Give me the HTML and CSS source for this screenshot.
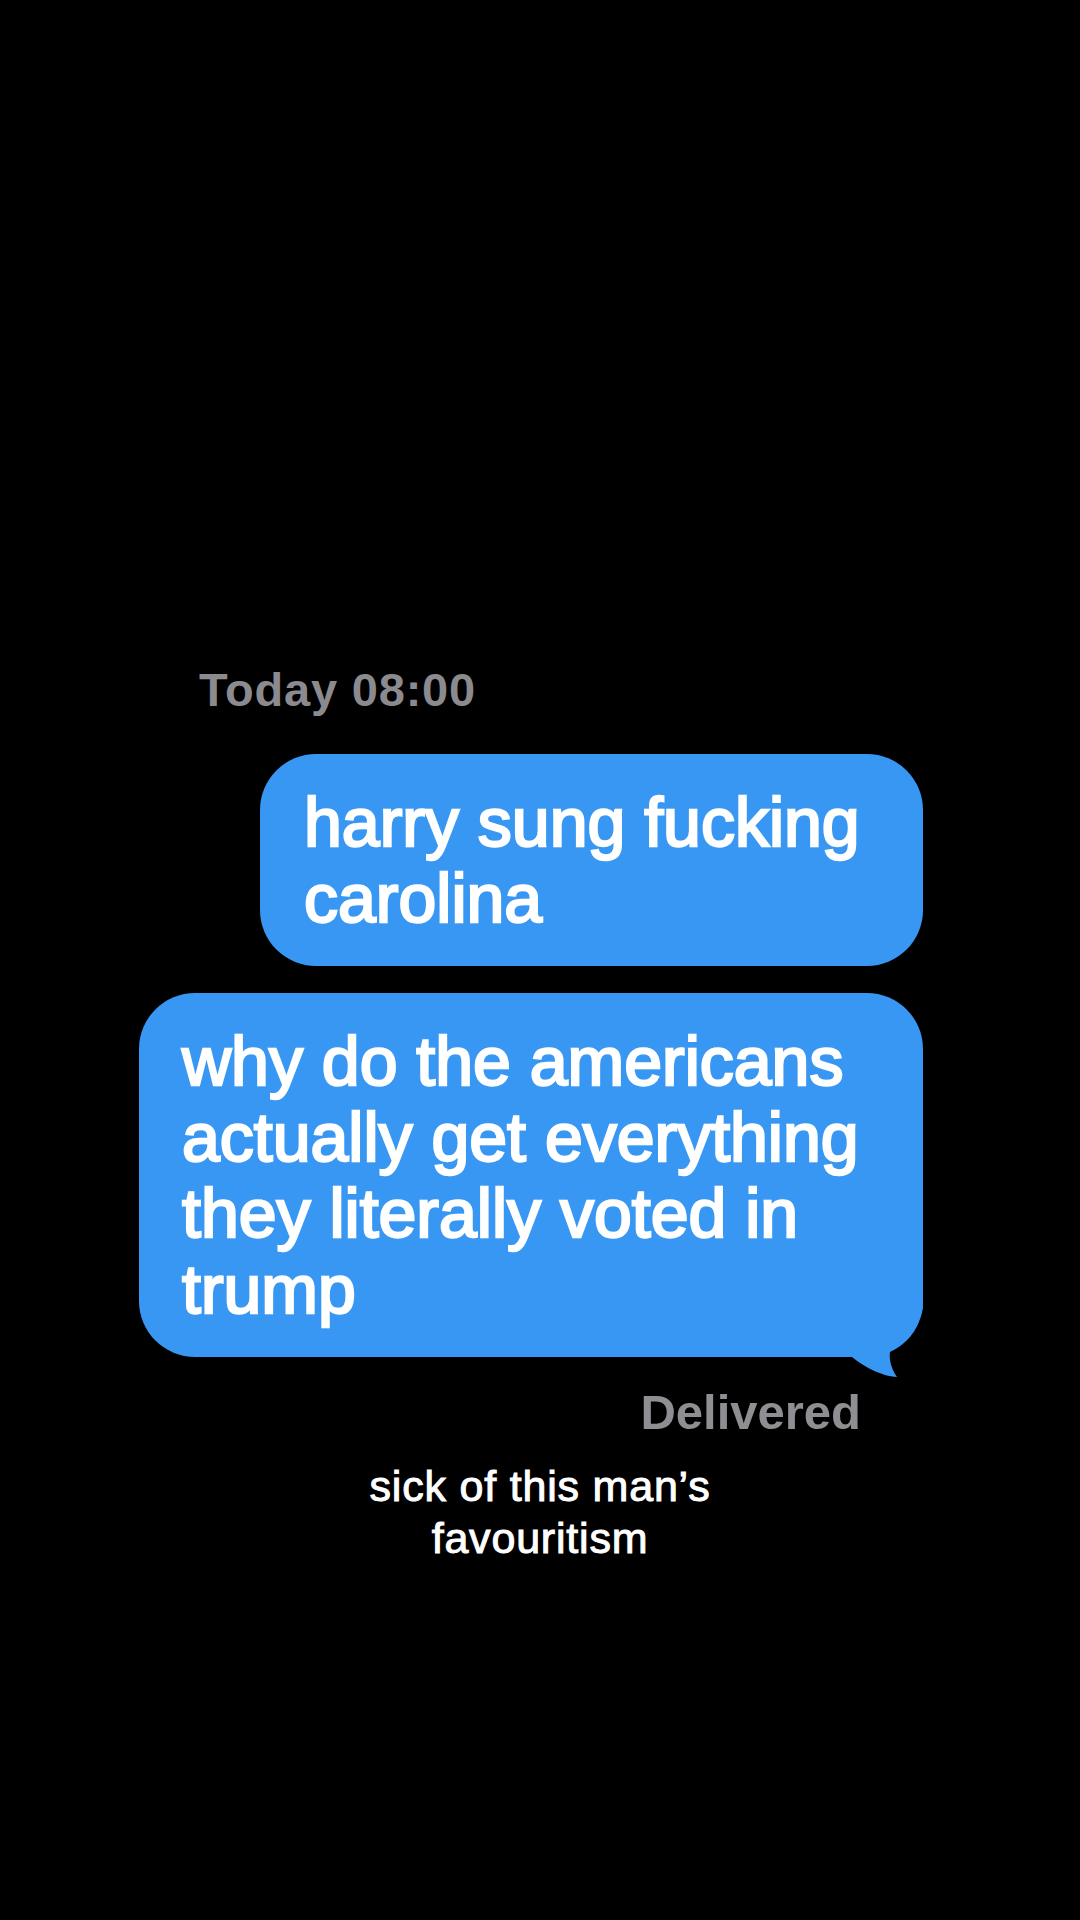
FILE: index.html
```html
<!DOCTYPE html>
<html lang="en">
<head>
<meta charset="utf-8">
<title>Messages</title>
<link rel="stylesheet" href="styles.css">
</head>
<body>
<main class="screen">
  <section class="chat">
    <div class="timestamp">Today 08:00</div>
    <div class="bubble bubble-short">harry sung fucking<br>carolina</div>
    <div class="bubble bubble-long">
      why do the americans<br>actually get everything<br>they literally voted in<br>trump
      <svg class="tail" width="85" height="80" viewBox="0 0 85 80" aria-hidden="true">
        <path d="M0,0 L83,0 L83,4 C83,26 64,36 52,46 C48,52 49,66 57,77 C45,77 25,68 12,57 L0,57 Z" fill="#3897f3"/>
      </svg>
    </div>
    <div class="status">Delivered</div>
  </section>
  <p class="caption">sick of this man’s<br>favouritism</p>
</main>
</body>
</html>
```

FILE: styles.css
```css
html, body {
  margin: 0;
  padding: 0;
  background: #000;
}

.screen {
  width: 1080px;
  height: 1920px;
  background: #000;
  display: flex;
  flex-direction: column;
  font-family: "Liberation Sans", Arial, sans-serif;
}

.chat {
  display: flex;
  flex-direction: column;
  padding: 662px 157px 0 141px;
}

.timestamp {
  align-self: flex-start;
  margin-left: 58px;
  font-size: 47px;
  line-height: 56px;
  font-weight: 700;
  letter-spacing: 0.8px;
  color: #8b8b8f;
}

.bubble {
  position: relative;
  box-sizing: border-box;
  background: #3897f3;
  color: #fff;
  font-size: 68px;
  line-height: 76px;
  white-space: nowrap;
  -webkit-text-stroke: 2.4px #fff;
  border-radius: 56px;
  padding: 30px 56px 30px 44px;
}

.bubble-short {
  align-self: flex-end;
  width: 663px;
  margin-top: 36px;
}

.bubble-long {
  align-self: flex-end;
  width: 784px;
  margin-top: 27px;
  padding-left: 43px;
}

.tail {
  position: absolute;
  right: -2px;
  bottom: -23px;
  display: block;
}

.status {
  align-self: flex-end;
  margin-top: 27px;
  margin-right: 62px;
  font-size: 49px;
  line-height: 56px;
  font-weight: 700;
  color: #8e8e93;
}

.caption {
  margin: 20px 0 0;
  text-align: center;
  color: #fff;
  font-size: 43px;
  line-height: 52px;
  letter-spacing: 0.8px;
  -webkit-text-stroke: 1px #fff;
}
```
